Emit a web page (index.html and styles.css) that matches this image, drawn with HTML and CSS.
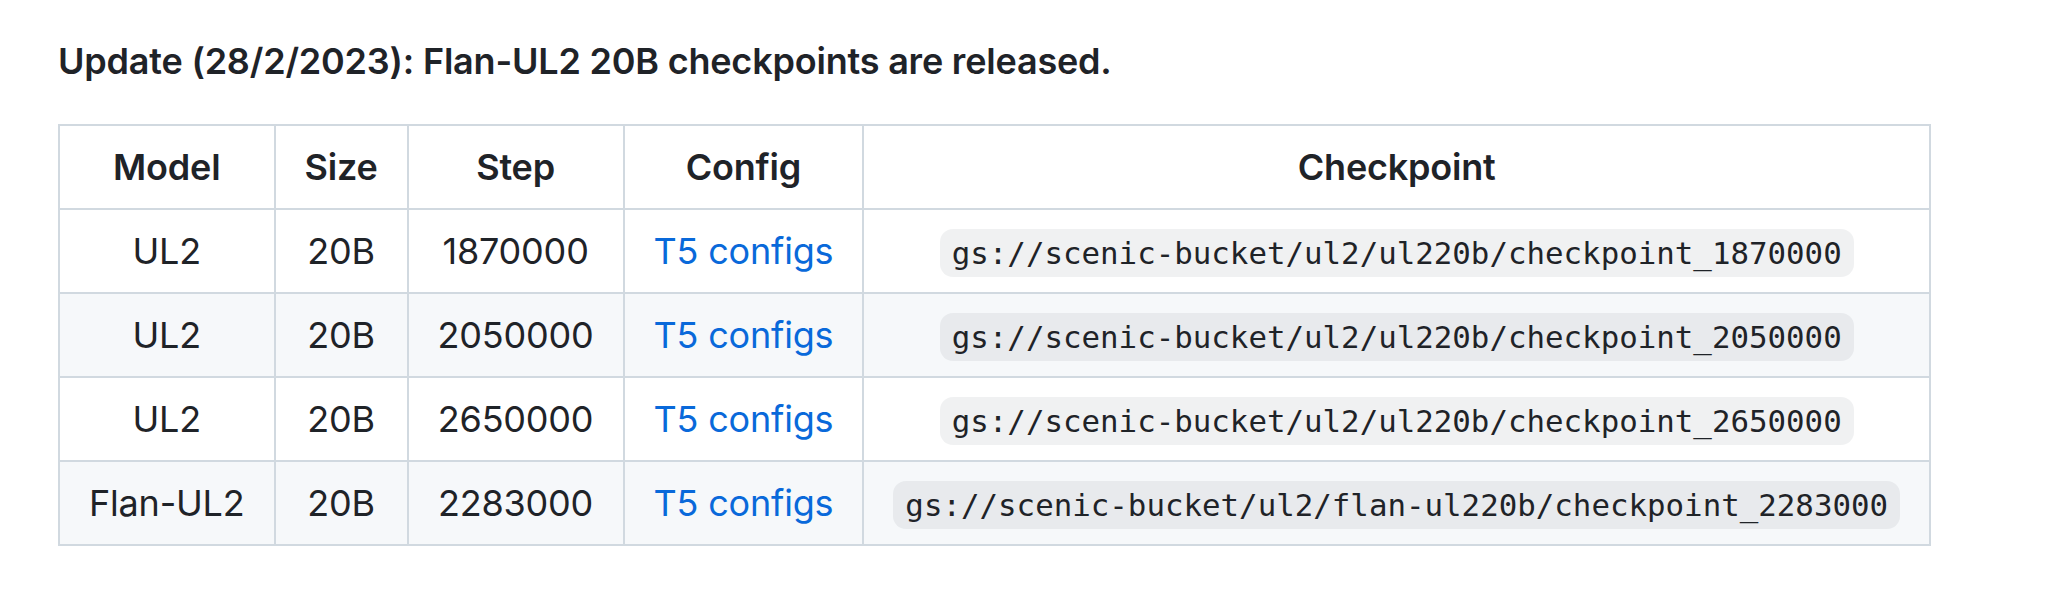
FILE: index.html
```html
<!DOCTYPE html>
<html lang="en">
<head>
    <meta charset="UTF-8">
    <meta name="viewport" content="width=device-width, initial-scale=1.0">
    <title>UL2 checkpoints</title>
    <link rel="stylesheet" href="styles.css">
</head>
<body>
    <article class="markdown-body">
        <p class="update"><strong>Update (28/2/2023): Flan-UL2 20B checkpoints are released.</strong></p>
        <table class="ckpt-table">
            <thead>
                <tr>
                    <th>Model</th>
                    <th>Size</th>
                    <th>Step</th>
                    <th>Config</th>
                    <th>Checkpoint</th>
                </tr>
            </thead>
            <tbody>
                <tr>
                    <td>UL2</td>
                    <td>20B</td>
                    <td>1870000</td>
                    <td><a href="#">T5 configs</a></td>
                    <td><code>gs://scenic-bucket/ul2/ul220b/checkpoint_1870000</code></td>
                </tr>
                <tr>
                    <td>UL2</td>
                    <td>20B</td>
                    <td>2050000</td>
                    <td><a href="#">T5 configs</a></td>
                    <td><code>gs://scenic-bucket/ul2/ul220b/checkpoint_2050000</code></td>
                </tr>
                <tr>
                    <td>UL2</td>
                    <td>20B</td>
                    <td>2650000</td>
                    <td><a href="#">T5 configs</a></td>
                    <td><code>gs://scenic-bucket/ul2/ul220b/checkpoint_2650000</code></td>
                </tr>
                <tr>
                    <td>Flan-UL2</td>
                    <td>20B</td>
                    <td>2283000</td>
                    <td><a href="#">T5 configs</a></td>
                    <td><code>gs://scenic-bucket/ul2/flan-ul220b/checkpoint_2283000</code></td>
                </tr>
            </tbody>
        </table>
    </article>
</body>
</html>
```

FILE: styles.css
```css
body {
    margin: 0;
    background: #fff;
    color: #1f2328;
    font-family: Inter, "Liberation Sans", sans-serif;
    font-size: 36px;
    line-height: 1.5;
    letter-spacing: -0.2px;
}

.markdown-body {
    padding: 34px 58px;
}

.update {
    margin: 0 0 36px;
}

.update strong {
    font-weight: 600;
}

.ckpt-table {
    border-collapse: collapse;
    border-spacing: 0;
}

.ckpt-table th,
.ckpt-table td {
    padding: 14px 29px;
    border: 2px solid #d1d9e0;
    text-align: center;
}

.ckpt-table th {
    font-weight: 600;
}

.ckpt-table tbody tr:nth-child(odd) {
    background: #fff;
}

.ckpt-table tbody tr:nth-child(even) {
    background: #f6f8fa;
}

.ckpt-table a {
    color: #0969da;
    text-decoration: none;
}

.ckpt-table code {
    font-family: "DejaVu Sans Mono", "Liberation Mono", monospace;
    font-size: 30.8px;
    letter-spacing: 0;
    padding: 6px 12px;
    border-radius: 13px;
    background: rgba(129, 139, 152, 0.12);
    white-space: nowrap;
}
```
